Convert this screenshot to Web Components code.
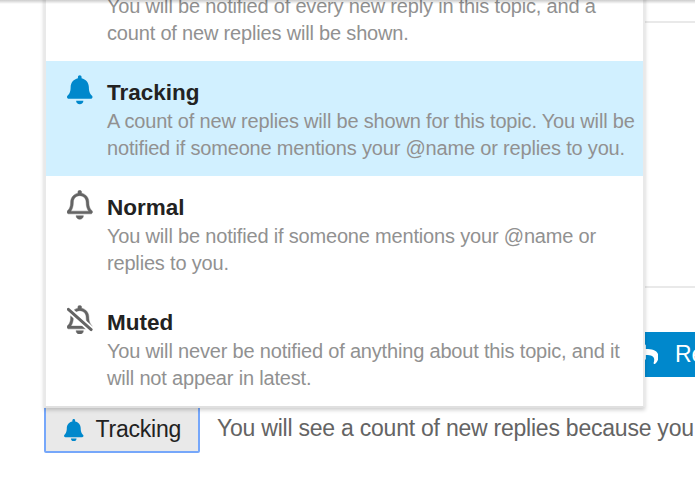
<!DOCTYPE html>
<html lang="en">
<head>
<meta charset="utf-8">
<title>Topic notifications</title>
<style>
    html, body {
        margin: 0;
        height: 100%;
        overflow: hidden;
        background: #fff;
    }
    body {
        font-family: "Liberation Sans", Arial, sans-serif;
        color: #222;
    }
</style>
</head>
<body>
<topic-page>
    <reply-button slot="actions">Reply</reply-button>
    <notifications-button slot="footer" icon="bell">Tracking</notifications-button>
    <span slot="footer">You will see a count of new replies because you</span>
    <notifications-menu slot="menu">
        <notification-level>You will be notified of every new reply in this topic, and a count of new replies will be shown.</notification-level>
        <notification-level icon="bell" name="Tracking" selected>A count of new replies will be shown for this topic. You will be notified if someone mentions your @name or replies to you.</notification-level>
        <notification-level icon="bell-outline" name="Normal">You will be notified if someone mentions your @name or replies to you.</notification-level>
        <notification-level icon="bell-slash" name="Muted">You will never be notified of anything about this topic, and it will not appear in latest.</notification-level>
    </notifications-menu>
</topic-page>

<script>
const CLAPPER = 'M224 512c35.32 0 63.97-28.65 63.97-64H160.03c0 35.35 28.65 64 63.97 64z';
const BELL = 'M439.39 362.29c-19.32-20.76-55.47-51.99-55.47-154.29 0-77.7-54.48-139.9-127.94-155.16V32c0-17.67-14.32-32-31.98-32s-31.98 14.33-31.98 32v20.84C118.56 68.1 64.08 130.3 64.08 208c0 102.3-36.15 133.53-55.47 154.29-6 6.45-8.66 14.16-8.61 21.71.11 16.4 12.98 32 32.1 32h383.8c19.12 0 32-15.6 32.1-32 .05-7.55-2.61-15.27-8.61-21.71z';
const BELL_HOLE = 'M67.53 368c21.22-27.97 44.42-74.33 44.53-159.42 0-.2-.06-.38-.06-.58 0-61.86 50.14-112 112-112s112 50.14 112 112c0 .2-.06.38-.06.58.11 85.1 23.31 131.46 44.53 159.42H67.53z';
const REPLY = 'M8.309 189.836L184.313 37.851C199.719 24.546 224 35.347 224 56.015v80.053c160.629 1.839 288 34.032 288 186.258 0 61.441-39.581 122.309-83.333 154.132-13.653 9.931-33.111-2.533-28.077-18.631 45.344-145.012-21.507-183.51-176.59-185.742V360c0 20.7-24.3 31.453-39.687 18.164l-176.004-152c-11.071-9.562-11.086-26.753 0-36.328z';

const icons = {
    'bell': { box: '0 0 448 512', body: `<path d="${BELL}${CLAPPER}"/>` },
    'bell-outline': {
        box: '0 0 448 512',
        body: `<path fill-rule="evenodd" stroke="currentColor" stroke-width="8" d="${BELL}${BELL_HOLE}${CLAPPER}"/>`
    },
    'bell-slash': {
        box: '0 0 448 512',
        body: `
            <mask id="gap" maskUnits="userSpaceOnUse" x="0" y="0" width="448" height="512">
                <rect width="448" height="512" fill="#fff"/>
                <path d="M-20 32L468 468" stroke="#000" stroke-width="115"/>
            </mask>
            <path mask="url(#gap)" fill-rule="evenodd" stroke="currentColor" stroke-width="8" d="${BELL}${BELL_HOLE}${CLAPPER}"/>
            <path d="M24 72L424 429" stroke="currentColor" stroke-width="52" stroke-linecap="round"/>`
    },
    'reply': { box: '0 0 512 512', body: `<path d="${REPLY}"/>` }
};

class UiIcon extends HTMLElement {
    connectedCallback() {
        const { box, body } = icons[this.getAttribute('name')];
        this.attachShadow({ mode: 'open' });
        this.shadowRoot.innerHTML = `
            <style>
                :host { display: block; flex: none; }
                svg { display: block; width: 100%; height: 100%; fill: currentColor; }
            </style>
            <svg viewBox="${box}" aria-hidden="true">${body}</svg>
        `;
    }
}

class NotificationLevel extends HTMLElement {
    connectedCallback() {
        const icon = this.getAttribute('icon');
        const name = this.getAttribute('name');
        this.attachShadow({ mode: 'open' });
        this.shadowRoot.innerHTML = `
            <style>
                :host {
                    display: flex;
                    box-sizing: border-box;
                    height: 115px;
                    padding: 18px 0 14px 21px;
                    align-items: flex-end;
                    color: #646464;
                }
                :host([selected]) { background: #d1f0ff; color: #0088cc; }
                .icon { width: 40px; align-self: flex-start; margin-top: -3.5px; }
                ui-icon { width: 25.5px; height: 29.5px; }
                .name {
                    margin-bottom: 2px;
                    font-size: 22.5px;
                    font-weight: bold;
                    line-height: 27px;
                    color: #222;
                }
                .text { flex: none; width: 532px; }
                .desc {
                    font-size: 20px;
                    line-height: 27px;
                    letter-spacing: -0.18px;
                    color: #919191;
                }
            </style>
            <div class="icon">${icon ? `<ui-icon name="${icon}"></ui-icon>` : ''}</div>
            <div class="text">
                ${name ? `<div class="name">${name}</div>` : ''}
                <div class="desc"><slot></slot></div>
            </div>
        `;
    }
}

class NotificationsMenu extends HTMLElement {
    connectedCallback() {
        this.attachShadow({ mode: 'open' });
        this.shadowRoot.innerHTML = `
            <style>
                :host {
                    display: block;
                    box-sizing: border-box;
                    width: 601px;
                    border: 2px solid #e9e9e9;
                    border-bottom-color: #e0e0e0;
                    background: #fff;
                    box-shadow: 0 2px 4px rgba(0,0,0,0.2);
                }
            </style>
            <slot></slot>
        `;
    }
}

class NotificationsButton extends HTMLElement {
    connectedCallback() {
        this.attachShadow({ mode: 'open' });
        this.shadowRoot.innerHTML = `
            <style>
                :host {
                    display: flex;
                    box-sizing: border-box;
                    align-items: center;
                    gap: 12px;
                    width: 156px;
                    height: 48px;
                    padding-left: 18px;
                    border: 2px solid #76a7fa;
                    border-radius: 2px;
                    background: #e9e9e9;
                }
                ui-icon { width: 19.5px; height: 22.5px; margin-top: 2px; color: #0088cc; }
            </style>
            <ui-icon name="${this.getAttribute('icon')}"></ui-icon>
            <slot></slot>
        `;
    }
}

class ReplyButton extends HTMLElement {
    connectedCallback() {
        this.attachShadow({ mode: 'open' });
        this.shadowRoot.innerHTML = `
            <style>
                :host {
                    display: flex;
                    align-items: center;
                    gap: 17px;
                    height: 45px;
                    padding: 0 18px;
                    background: #0088cc;
                    color: #fff;
                }
                ui-icon { width: 22.5px; height: 22.5px; }
            </style>
            <ui-icon name="reply"></ui-icon>
            <slot></slot>
        `;
    }
}

class TopicPage extends HTMLElement {
    connectedCallback() {
        this.attachShadow({ mode: 'open' });
        this.shadowRoot.innerHTML = `
            <style>
                :host {
                    display: flex;
                    flex-direction: column;
                    position: relative;
                    height: 480px;
                    overflow: hidden;
                    font-size: 23px;
                    letter-spacing: -0.23px;
                    white-space: nowrap;
                }
                .map {
                    box-sizing: border-box;
                    height: 267px;
                    margin: 21px 0 44px 100px;
                    border: solid #e9e9e9;
                    border-width: 2px 0;
                }
                .actions { display: flex; padding-left: 617.5px; }
                .footer {
                    display: flex;
                    align-items: center;
                    gap: 17px;
                    margin-top: 28px;
                    padding-left: 44px;
                    color: #646464;
                }
                .footer ::slotted(notifications-button) { flex: none; color: #222; }
                .footer ::slotted(span) { margin-top: -2px; }
                /* opens upwards from the button */
                .menu {
                    position: absolute;
                    left: 44px;
                    bottom: 72.5px;
                    white-space: normal;
                    letter-spacing: normal;
                }
                /* shadow cast by the fixed site header */
                .header-shadow {
                    position: absolute;
                    top: 0;
                    left: 0;
                    right: 0;
                    height: 4px;
                    background: linear-gradient(rgba(0,0,0,0.2), rgba(0,0,0,0));
                }
            </style>
            <div class="map"></div>
            <div class="actions"><slot name="actions"></slot></div>
            <div class="footer"><slot name="footer"></slot></div>
            <div class="menu"><slot name="menu"></slot></div>
            <div class="header-shadow"></div>
        `;
    }
}

customElements.define('ui-icon', UiIcon);
customElements.define('notification-level', NotificationLevel);
customElements.define('notifications-menu', NotificationsMenu);
customElements.define('notifications-button', NotificationsButton);
customElements.define('reply-button', ReplyButton);
customElements.define('topic-page', TopicPage);
</script>
</body>
</html>
